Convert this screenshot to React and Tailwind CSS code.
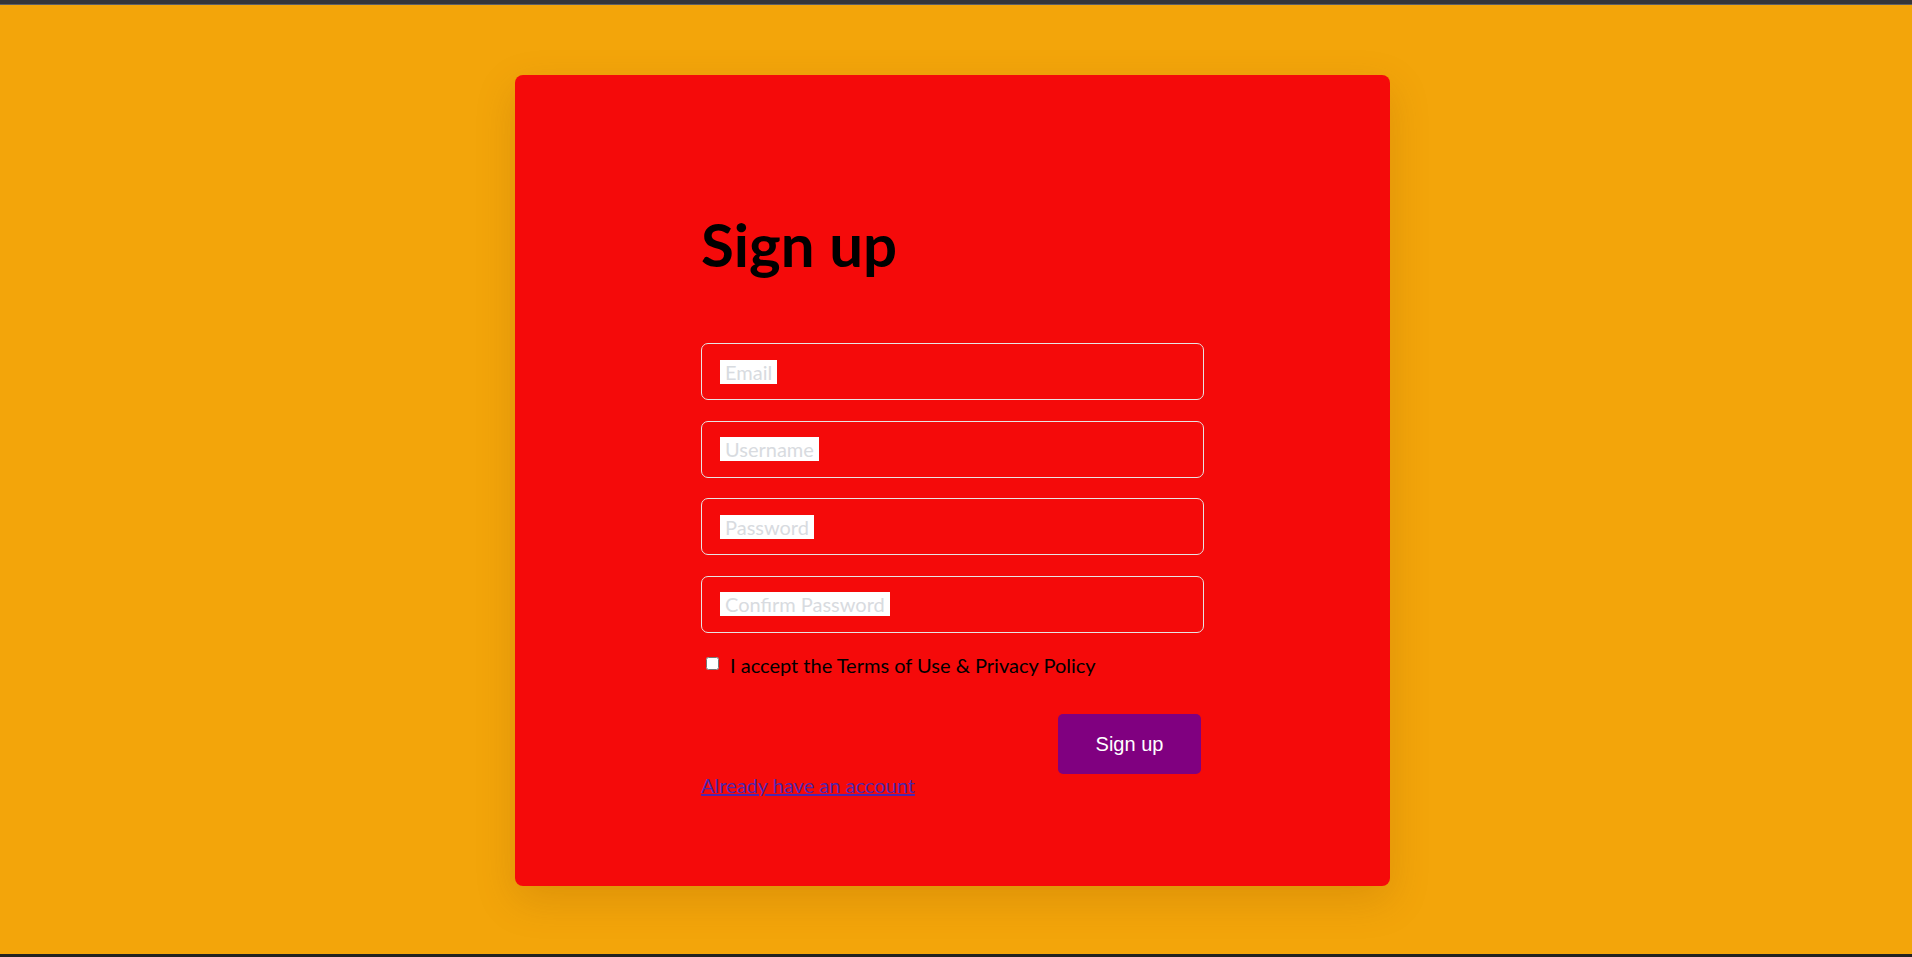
export default function App() {
  const fields = ["Email", "Username", "Password", "Confirm Password"];
  return (
    <div className="flex h-screen w-full flex-col bg-[#f3a50a]" style={{ fontFamily: "Lato, 'Noto Sans', sans-serif" }}>
      <div className="h-[5px] w-full shrink-0 border-b border-[#5f6064] bg-[#35363a]" />
      <div className="flex flex-1 justify-center pr-[7px] pt-[70px]">
        <div className="flex h-[811px] w-[875px] flex-col items-center rounded-[8px] bg-[#f50a0a] pt-[133px] shadow-[0_14px_40px_rgba(120,60,0,0.18)]">
          <div className="flex w-[503px] flex-col">
            <h1 className="text-[60px] font-bold leading-[1.2] text-black">Sign up</h1>
            <div className="mt-[63px] flex flex-col gap-[20.5px]">
              {fields.map((f) => (
                <div key={f} className="flex h-[57px] items-center rounded-[7px] border border-[#e8e4e4] pl-[18px]">
                  <span className="bg-white px-[5px] text-[20px] leading-[24px] text-[#d8dbe0]">{f}</span>
                </div>
              ))}
            </div>
            <label className="mt-[20px] flex items-center text-[20px] leading-[24px] text-black">
              <input type="checkbox" className="ml-[5px] mr-[11px] h-[13px] w-[13px] -translate-y-[1px]" />
              <span>I accept the Terms of Use &amp; Privacy Policy</span>
            </label>
            <div className="mt-[37px] flex justify-end">
              <button
                className="mr-[3px] h-[60px] w-[143px] rounded-[5px] bg-[#800080] text-[20px] text-white"
                style={{ fontFamily: "'Liberation Sans', Arial, sans-serif" }}
              >
                Sign up
              </button>
            </div>
            <div className="-mt-[1px]">
              <a href="#" className="text-[20px] leading-[24px] text-[#4e26ad] underline">
                Already have an account
              </a>
            </div>
          </div>
        </div>
      </div>
      <div className="h-[3px] w-full shrink-0 bg-[#222222]" />
    </div>
  );
}
